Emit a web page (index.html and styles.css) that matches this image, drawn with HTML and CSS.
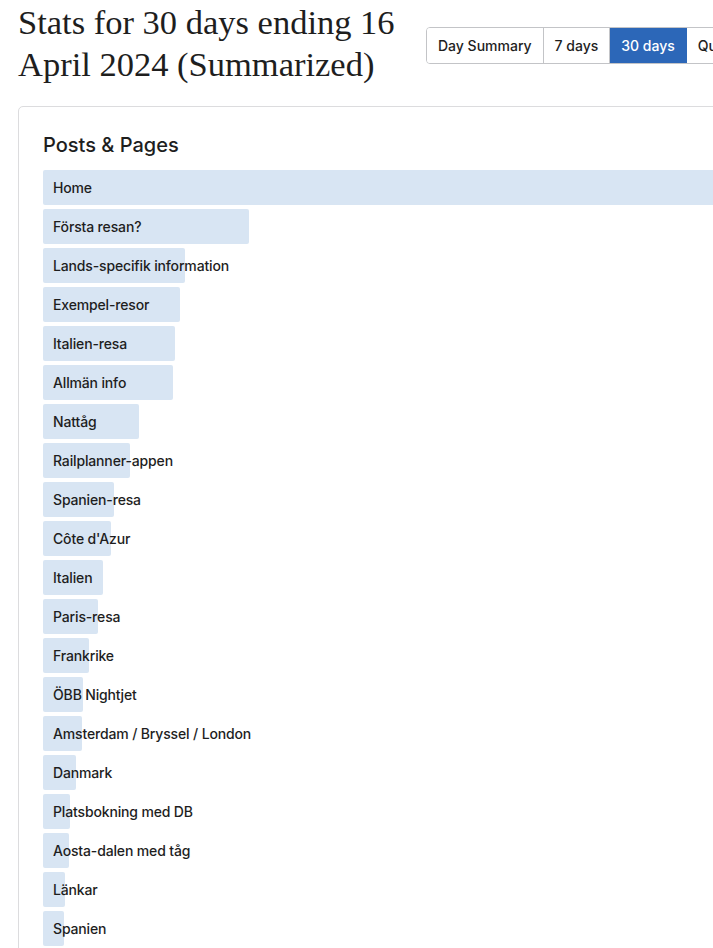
FILE: index.html
```html
<!DOCTYPE html>
<html lang="sv">
<head>
<meta charset="utf-8">
<title>Stats</title>
<link rel="stylesheet" href="styles.css">
</head>
<body>
<div class="page">
  <header class="header">
    <h1 class="title">Stats for 30 days ending 16 April 2024 (Summarized)</h1>
    <nav class="tabs">
      <button class="tab">Day Summary</button>
      <button class="tab">7 days</button>
      <button class="tab active">30 days</button>
      <button class="tab">Quarter</button>
      <button class="tab">Year</button>
    </nav>
  </header>
  <section class="card">
    <h2 class="card-title">Posts &amp; Pages</h2>
    <ul class="rows">
      <li class="row"><span class="bar" style="width:100%"></span><span class="label">Home</span></li>
      <li class="row"><span class="bar" style="width:206px"></span><span class="label">Första resan?</span></li>
      <li class="row"><span class="bar" style="width:142px"></span><span class="label">Lands-specifik information</span></li>
      <li class="row"><span class="bar" style="width:137px"></span><span class="label">Exempel-resor</span></li>
      <li class="row"><span class="bar" style="width:132px"></span><span class="label">Italien-resa</span></li>
      <li class="row"><span class="bar" style="width:130px"></span><span class="label">Allmän info</span></li>
      <li class="row"><span class="bar" style="width:96px"></span><span class="label">Nattåg</span></li>
      <li class="row"><span class="bar" style="width:87px"></span><span class="label">Railplanner-appen</span></li>
      <li class="row"><span class="bar" style="width:71px"></span><span class="label">Spanien-resa</span></li>
      <li class="row"><span class="bar" style="width:68px"></span><span class="label">Côte d'Azur</span></li>
      <li class="row"><span class="bar" style="width:60px"></span><span class="label">Italien</span></li>
      <li class="row"><span class="bar" style="width:55px"></span><span class="label">Paris-resa</span></li>
      <li class="row"><span class="bar" style="width:46px"></span><span class="label">Frankrike</span></li>
      <li class="row"><span class="bar" style="width:40px"></span><span class="label">ÖBB Nightjet</span></li>
      <li class="row"><span class="bar" style="width:39px"></span><span class="label">Amsterdam / Bryssel / London</span></li>
      <li class="row"><span class="bar" style="width:33px"></span><span class="label">Danmark</span></li>
      <li class="row"><span class="bar" style="width:27px"></span><span class="label">Platsbokning med DB</span></li>
      <li class="row"><span class="bar" style="width:26px"></span><span class="label">Aosta-dalen med tåg</span></li>
      <li class="row"><span class="bar" style="width:22px"></span><span class="label">Länkar</span></li>
      <li class="row"><span class="bar" style="width:21px"></span><span class="label">Spanien</span></li>
    </ul>
  </section>
</div>
</body>
</html>
```
FILE: styles.css
```css
html, body {
  margin: 0;
  padding: 0;
  background: #fff;
  overflow: hidden;
}
body {
  font-family: Inter, "Noto Sans", "Liberation Sans", sans-serif;
  color: #1e1e1e;
}
.page {
  width: 1200px;
  padding: 0 0 0 18px;
}
.header {
  display: flex;
  align-items: flex-start;
  gap: 8px;
}
.title {
  width: 400px;
  margin: 1px 0 0;
  font-family: "Liberation Serif", "DejaVu Serif", serif;
  font-weight: 400;
  font-size: 34.5px;
  line-height: 42px;
  color: #1e1e1e;
  letter-spacing: 0;
}
.tabs {
  display: flex;
  margin-top: 27px;
  border: 1px solid #c3c4c7;
  border-radius: 4px;
  overflow: hidden;
  height: 35px;
}
.tab {
  font-family: Inter, "Noto Sans", "Liberation Sans", sans-serif;
  font-size: 14px;
  font-weight: 500;
  color: #1e1e1e;
  background: #fff;
  border: 0;
  border-right: 1px solid #c3c4c7;
  padding: 0 11px;
  margin: 0;
  height: 35px;
}
.tab:last-child { border-right: 0; }
.tab.active {
  background: #2c67b8;
  color: #fff;
  border-right-color: #2c67b8;
}
.card {
  margin-top: 21px;
  width: 1100px;
  border: 1px solid #dcdcde;
  border-radius: 5px;
  padding: 24px;
}
.card-title {
  margin: 0 0 11px;
  font-size: 20px;
  font-weight: 500;
  line-height: 28px;
  color: #1e1e1e;
}
.rows {
  list-style: none;
  margin: 0;
  padding: 0;
  display: flex;
  flex-direction: column;
  gap: 4px;
}
.row {
  position: relative;
  height: 35px;
  display: flex;
  align-items: center;
}
.bar {
  position: absolute;
  left: 0;
  top: 0;
  bottom: 0;
  background: #d8e5f3;
  border-radius: 2px;
}
.label {
  position: relative;
  padding-left: 10px;
  font-size: 14px;
  font-weight: 500;
  letter-spacing: -0.15px;
  color: #1e1e1e;
}
```
